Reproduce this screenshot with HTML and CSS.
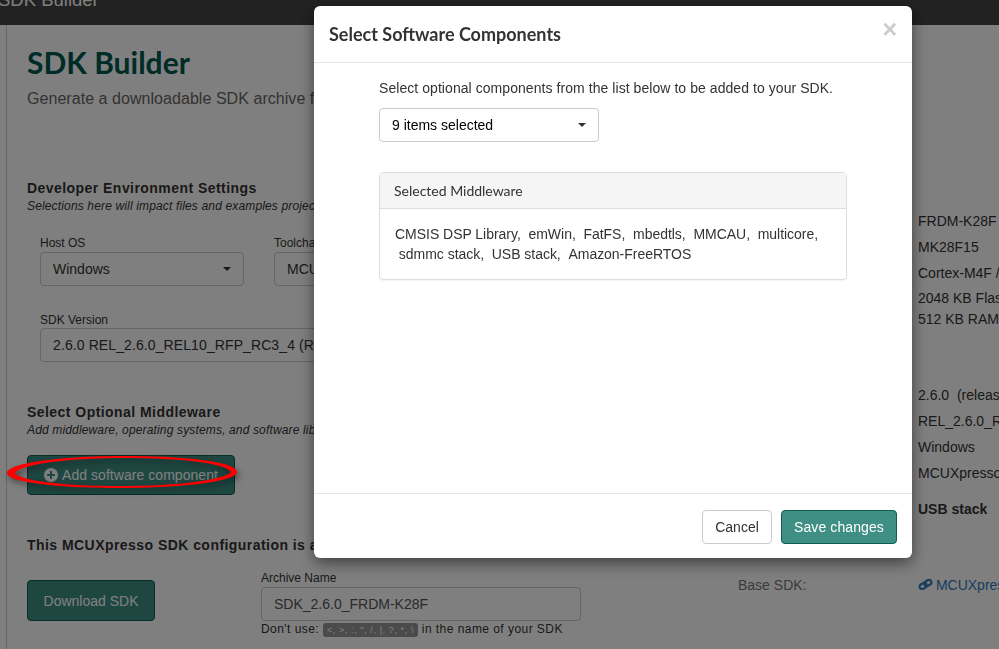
FILE: index.html
```html
<!DOCTYPE html>
<html>
<head>
	<meta charset="utf-8">
	<meta name="viewport" content="width=device-width, initial-scale=1">
	<title>SDK Builder</title>
	<link rel="stylesheet" href="styles.css">
</head>
<body>
<nav class="navbar"><span class="brand">SDK Builder</span></nav>
<div class="page">
	<div class="rail"></div>
	<div class="content">
		<div class="main-col">
			<h1>SDK Builder</h1>
			<p class="lead">Generate a downloadable SDK archive for</p>

			<h4 class="section first">Developer Environment Settings</h4>
			<p class="hint">Selections here will impact files and examples projects</p>
			<div class="fields">
				<div class="field">
					<label>Host OS</label>
					<div class="select short"><span>Windows</span><i class="caret"></i></div>
				</div>
				<div class="field">
					<label>Toolchain</label>
					<div class="select short"><span>MCUXpresso</span><i class="caret"></i></div>
				</div>
			</div>
			<div class="fields second">
				<div class="field">
					<label>SDK Version</label>
					<div class="select long"><span>2.6.0 REL_2.6.0_REL10_RFP_RC3_4 (R</span><i class="caret"></i></div>
				</div>
			</div>

			<h4 class="section">Select Optional Middleware</h4>
			<p class="hint">Add middleware, operating systems, and software libraries</p>
			<button class="btn btn-add">
				<svg class="plus" viewBox="0 0 14 14"><path fill-rule="evenodd" d="M7 0a7 7 0 1 0 0 14A7 7 0 0 0 7 0zM6 3h2v3h3v2H8v3H6V8H3V6h3z"/></svg>
				Add software component
			</button>

			<h4 class="section">This MCUXpresso SDK configuration is available</h4>
			<div class="download">
				<button class="btn btn-download">Download SDK</button>
				<div class="archive">
					<label>Archive Name</label>
					<div class="input">SDK_2.6.0_FRDM-K28F</div>
					<p class="warn">Don't use: <code>&lt;, &gt;, :, ", /, |, ?, *, \</code> in the name of your SDK</p>
				</div>
			</div>
		</div>

		<div class="side-col">
			<div class="row">FRDM-K28F</div>
			<div class="row">MK28F15</div>
			<div class="row">Cortex-M4F /</div>
			<div class="row memory">2048 KB Flash<br>512 KB RAM</div>
			<div class="row version">2.6.0 &nbsp;(release)</div>
			<div class="row">REL_2.6.0_RFP</div>
			<div class="row">Windows</div>
			<div class="row">MCUXpresso</div>
			<div class="row usb"><b>USB stack</b></div>
			<div class="row base"><span class="base-label">Base SDK:</span><a href="#"><svg class="chain" viewBox="0 0 15 11"><g fill="none" stroke="currentColor" stroke-width="2.2" transform="rotate(-32 7.5 5.5)"><rect x="1" y="3" width="7.5" height="5" rx="2.5"/><rect x="6.5" y="3" width="7.5" height="5" rx="2.5"/></g></svg> MCUXpresso</a></div>
		</div>
	</div>
</div>

<div class="backdrop"></div>

<svg class="circle-mark" viewBox="0 0 240 44">
	<path fill-rule="evenodd" d="M7 23C7 14 55 6 125 6c62 0 112 6 112 16 0 9-52 16-118 16C56 38 7 32 7 23zM15 23c3 7 45 13 104 13 60 0 105-6 112-14C225 13 180 8 125 8 62 8 20 15 15 23z"/>
</svg>

<div class="modal">
	<div class="modal-header">
		<h3>Select Software Components</h3>
		<span class="close">×</span>
	</div>
	<div class="modal-body">
		<p class="intro">Select optional components from the list below to be added to your SDK.</p>
		<div class="select picker"><span>9 items selected</span><i class="caret"></i></div>
		<div class="panel">
			<div class="panel-heading">Selected Middleware</div>
			<div class="panel-body">
				CMSIS DSP Library, &nbsp;emWin, &nbsp;FatFS, &nbsp;mbedtls, &nbsp;MMCAU, &nbsp;multicore,<br>
				&nbsp;sdmmc stack, &nbsp;USB stack, &nbsp;Amazon-FreeRTOS
			</div>
		</div>
	</div>
	<div class="modal-footer">
		<button class="btn btn-cancel">Cancel</button>
		<button class="btn btn-save">Save changes</button>
	</div>
</div>
</body>
</html>
```

FILE: styles.css
```css
* {
	box-sizing: border-box;
}

html, body {
	height: 100%;
}

body {
	margin: 0;
	overflow: hidden;
	background: #fff;
	color: #333;
	font-family: "Liberation Sans", Arial, sans-serif;
	font-size: 14px;
}

p, h1, h3, h4 {
	margin: 0;
}

/* top bar, the title is cut off by the top of the window */
.navbar {
	height: 25px;
	background: #444;
	overflow: hidden;
}

.brand {
	display: block;
	margin: -12px 0 0 -2px;
	color: #fff;
	font-size: 18.5px;
	line-height: 24px;
}

.page {
	display: flex;
	height: 624px;
	overflow: hidden;
}

.rail {
	flex: none;
	width: 7px;
	border-right: 1px solid #ccc;
}

.content {
	display: flex;
	flex: 1;
	padding-left: 20px;
}

.main-col {
	flex: none;
	width: 711px;
}

h1 {
	margin-top: 19px;
	color: #00584f;
	font-family: Lato, sans-serif;
	font-size: 30px;
	font-weight: 700;
	line-height: 36px;
}

.lead {
	margin-top: 9px;
	color: #666;
	font-size: 16px;
	line-height: 20px;
	letter-spacing: .05px;
	white-space: nowrap;
}

.section {
	margin-top: 41px;
	color: #333;
	font-size: 14px;
	font-weight: 700;
	line-height: 18px;
	letter-spacing: .45px;
	white-space: nowrap;
}

.section.first {
	margin-top: 70px;
}

.hint {
	margin-top: 1px;
	font-size: 12px;
	font-style: italic;
	line-height: 16px;
	letter-spacing: .15px;
	white-space: nowrap;
}

label {
	display: block;
	margin-bottom: 2px;
	font-size: 12px;
	line-height: 14px;
}

.fields {
	display: flex;
	gap: 30px;
	margin-top: 22px;
	padding-left: 13px;
}

.fields.second {
	margin-top: 27px;
}

.fields.second label {
	margin-bottom: 1px;
}

.select {
	display: flex;
	align-items: center;
	justify-content: space-between;
	height: 34px;
	padding: 0 12px;
	border: 1px solid #ccc;
	border-radius: 4px;
	background: #fff;
	white-space: nowrap;
}

.select.short {
	width: 204px;
}

.select.long {
	width: 600px;
	letter-spacing: .1px;
}

.caret {
	border-top: 4px solid #333;
	border-left: 4px solid transparent;
	border-right: 4px solid transparent;
}

.btn {
	display: inline-block;
	border: 1px solid transparent;
	border-radius: 4px;
	font-family: "Liberation Sans", Arial, sans-serif;
	font-size: 14px;
	white-space: nowrap;
}

.btn-add, .btn-download {
	background: #3f8f85;
	border-color: #0f5c52;
	color: #fff;
}

.btn-add {
	display: flex;
	align-items: center;
	gap: 4px;
	width: 208px;
	height: 40px;
	margin-top: 17px;
	padding: 0 0 0 16px;
	letter-spacing: .05px;
}

.plus {
	width: 14px;
	height: 14px;
	fill: #fff;
}

.btn-download {
	flex: none;
	width: 128px;
	height: 41px;
	margin-top: 9px;
}

.download {
	display: flex;
	gap: 106px;
	margin-top: 17px;
}

.archive {
	width: 320px;
}

.input {
	height: 34px;
	padding: 0 12px;
	border: 1px solid #ccc;
	border-radius: 4px;
	color: #555;
	line-height: 32px;
}

.warn {
	margin-top: 1px;
	font-size: 12px;
	line-height: 14px;
	letter-spacing: .45px;
	white-space: nowrap;
}

code {
	padding: 2px 4px;
	border-radius: 3px;
	background: #969696;
	color: #fff;
	font-family: "Liberation Sans", sans-serif;
	font-size: 9px;
	letter-spacing: .6px;
}

.side-col {
	flex: 1;
	min-width: 0;
	padding-top: 186px;
}

.row {
	margin-bottom: 6px;
	padding-left: 180px;
	line-height: 20px;
	white-space: nowrap;
}

.row.memory {
	margin-top: -1px;
	line-height: 21px;
}

.row.version {
	margin-top: 55px;
}

.row.usb {
	margin-top: 16px;
}

.row.base {
	display: grid;
	grid-template-columns: 180px 1fr;
	margin-top: 56px;
	padding-left: 0;
}

.base-label {
	color: #777;
}

.row a {
	color: #337ab7;
	text-decoration: none;
}

.chain {
	width: 15px;
	height: 11px;
	margin-right: -1px;
}

/* dialog, over the dimmed page */
.backdrop {
	position: fixed;
	inset: 0;
	background: rgba(0, 0, 0, .5);
}

.circle-mark {
	position: absolute;
	left: 0;
	top: 450px;
	width: 240px;
	height: 44px;
	fill: #f00;
	filter: drop-shadow(2px 3px 3px rgba(0, 0, 0, .5));
}

.modal {
	position: fixed;
	left: 314px;
	top: 6px;
	display: flex;
	flex-direction: column;
	width: 598px;
	height: 552px;
	border-radius: 6px;
	background: #fff;
	box-shadow: 0 5px 15px rgba(0, 0, 0, .5);
}

.modal-header {
	display: flex;
	align-items: flex-start;
	justify-content: space-between;
	height: 57px;
	padding: 15px 15px 0;
	border-bottom: 1px solid #e5e5e5;
}

.modal-header h3 {
	color: #333;
	font-family: Lato, sans-serif;
	font-size: 18px;
	font-weight: 700;
	line-height: 26px;
}

.close {
	color: #ccc;
	font-size: 25px;
	font-weight: 700;
	line-height: 16px;
}

.modal-body {
	flex: 1;
	padding: 15px 65px;
}

.intro {
	line-height: 20px;
	letter-spacing: .06px;
}

.picker {
	width: 220px;
	margin-top: 10px;
	color: #000;
}

.panel {
	width: 468px;
	margin-top: 30px;
	border: 1px solid #ddd;
	border-radius: 4px;
	box-shadow: 0 1px 1px rgba(0, 0, 0, .05);
}

.panel-heading {
	height: 36px;
	padding: 0 14px;
	border-bottom: 1px solid #ddd;
	background: #f5f5f5;
	font-family: Lato, sans-serif;
	font-size: 14px;
	line-height: 36px;
}

.panel-body {
	padding: 15px;
	line-height: 20px;
	letter-spacing: -.03px;
}

.modal-footer {
	display: flex;
	justify-content: flex-end;
	gap: 9px;
	height: 65px;
	padding: 16px 15px 0;
	border-top: 1px solid #e5e5e5;
}

.btn-cancel, .btn-save {
	height: 34px;
}

.btn-cancel {
	width: 70px;
	border-color: #ccc;
	background: #fff;
	color: #333;
}

.btn-save {
	width: 116px;
	border-color: #0f5c52;
	background: #3f8f85;
	color: #fff;
	letter-spacing: .1px;
}
```
